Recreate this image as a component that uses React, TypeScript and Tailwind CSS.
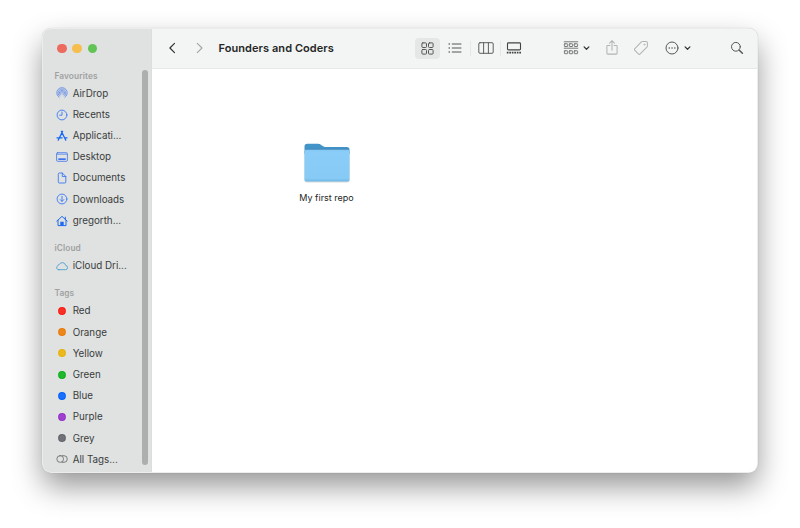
import React from "react";

type IconProps = { children: React.ReactNode; className?: string; w?: number; h?: number };

function Icon({ children, className = "", w = 12, h = 12 }: IconProps) {
  return (
    <svg
      width={w}
      height={h}
      viewBox={`0 0 ${w} ${h}`}
      fill="none"
      stroke="currentColor"
      strokeLinecap="round"
      strokeLinejoin="round"
      className={`shrink-0 ${className}`}
    >
      {children}
    </svg>
  );
}

const airdrop = (
  <Icon className="text-[#5f87e8]">
    <g strokeWidth="0.8">
      <path d="M3.1 10.4A5.3 5.3 0 1 1 8.9 10.4" />
      <path d="M3.6 9.1A3.95 3.95 0 1 1 8.4 9.1" />
      <path d="M4.3 8A2.65 2.65 0 1 1 7.7 8" />
      <path d="M5.1 7A1.35 1.35 0 1 1 6.9 7" />
    </g>
  </Icon>
);

const recents = (
  <Icon className="text-[#3d78f2]">
    <circle cx="6" cy="6" r="4.9" strokeWidth="0.9" />
    <path d="M6 3V6.2H3.6" strokeWidth="0.9" />
  </Icon>
);

const applications = (
  <Icon className="text-[#1468f5]">
    <path d="M5.4 1.4L9.8 10.2M6.6 1.4L2.2 10.2M1 7.8H6.1M8.8 7.8H11" strokeWidth="1.25" />
  </Icon>
);

const desktop = (
  <Icon className="text-[#3d72ee]">
    <rect x="0.6" y="1.7" width="10.8" height="8.6" rx="1" strokeWidth="0.8" />
    <path d="M1 3.2H11" strokeWidth="0.7" />
    <rect x="2.3" y="7.3" width="7.4" height="1.7" fill="currentColor" stroke="none" />
  </Icon>
);

const documents = (
  <Icon className="text-[#3d78f2]">
    <path d="M2.3 1.9Q2.3 1 3.2 1H6.3L9.8 4.5V10.1Q9.8 11 8.9 11H3.2Q2.3 11 2.3 10.1ZM6.3 1V4.5H9.8" strokeWidth="0.9" />
  </Icon>
);

const downloads = (
  <Icon className="text-[#3d78f2]">
    <circle cx="6" cy="6" r="4.9" strokeWidth="0.9" />
    <path d="M6 3.4V8.2M4.2 6.6L6 8.4L7.8 6.6" strokeWidth="0.95" />
  </Icon>
);

const home = (
  <Icon className="text-[#1f69f0]">
    <path d="M0.8 6.1L6 1.4L11.2 6.1M9.3 4.2V2.2M2 5.4V10.6H10V5.4" strokeWidth="1" />
    <path d="M4.3 10.8V6.8H7.7V10.8Z" fill="currentColor" stroke="none" />
  </Icon>
);

const cloud = (
  <Icon className="text-[#4fa0cf]">
    <path
      d="M2.9 9.7H9.3A2.1 2.1 0 0 0 9.6 5.5A3.3 3.3 0 0 0 3.4 4.4A1.7 1.7 0 0 0 1.8 5.9A2 2 0 0 0 2.9 9.7Z"
      strokeWidth="0.9"
    />
  </Icon>
);

const allTags = (
  <Icon className="text-[#5c5e5e]">
    <rect x="0.9" y="2.7" width="6.6" height="6.6" rx="3.1" strokeWidth="0.75" />
    <path d="M6 2.7H8A3.3 3.3 0 0 1 8 9.3H6" strokeWidth="0.75" />
  </Icon>
);

function Dot({ className }: { className: string }) {
  return (
    <svg width="12" height="12" viewBox="0 0 12 12" className={`shrink-0 ${className}`}>
      <circle cx="6" cy="6" r="3.9" fill="currentColor" />
      <circle cx="6" cy="6" r="2.9" fill="#fff" fillOpacity="0.1" />
    </svg>
  );
}

type Entry = { label: string; icon: React.ReactNode };

const favourites: Entry[] = [
  { label: "AirDrop", icon: airdrop },
  { label: "Recents", icon: recents },
  { label: "Applicati...", icon: applications },
  { label: "Desktop", icon: desktop },
  { label: "Documents", icon: documents },
  { label: "Downloads", icon: downloads },
  { label: "gregorth...", icon: home },
];

const tags: Entry[] = [
  { label: "Red", icon: <Dot className="text-[#fa190f]" /> },
  { label: "Orange", icon: <Dot className="text-[#ea7a05]" /> },
  { label: "Yellow", icon: <Dot className="text-[#e9b005]" /> },
  { label: "Green", icon: <Dot className="text-[#09b017]" /> },
  { label: "Blue", icon: <Dot className="text-[#0060fb]" /> },
  { label: "Purple", icon: <Dot className="text-[#952cc9]" /> },
  { label: "Grey", icon: <Dot className="text-[#606268]" /> },
  { label: "All Tags...", icon: allTags },
];

function Section({ title, entries, className = "" }: { title: string; entries: Entry[]; className?: string }) {
  return (
    <section className={className}>
      <h2 className="flex h-[14px] items-center pl-[11.5px] text-[8.3px] font-semibold tracking-[0.1px] text-[#9fa1a1]">
        {title}
      </h2>
      <ul>
        {entries.map((e) => (
          <li key={e.label} className="flex h-[21.2px] items-center gap-[4.7px] pl-[13px] text-[9.8px] text-[#3a3c3c]">
            {e.icon}
            <span className="pt-[1.4px] whitespace-nowrap">{e.label}</span>
          </li>
        ))}
      </ul>
    </section>
  );
}

function Sidebar() {
  return (
    <aside className="relative w-[108.5px] shrink-0 border-r border-[#dcdedd] bg-[#dfe2e1]">
      <div className="flex h-[39.8px] items-center gap-[5.8px] pb-px pl-[14.3px]">
        <span className="size-[9.4px] rounded-full bg-[#ed6a5f]" />
        <span className="size-[9.4px] rounded-full bg-[#f5be4e]" />
        <span className="size-[9.4px] rounded-full bg-[#61c455]" />
      </div>
      <Section title="Favourites" entries={favourites} />
      <Section title="iCloud" entries={[{ label: "iCloud Dri...", icon: cloud }]} className="mt-[10px]" />
      <Section title="Tags" entries={tags} className="mt-[10.2px]" />
      <span className="absolute top-[41px] right-[2.5px] h-[395px] w-[6px] rounded-full bg-[#adafaf]" />
    </aside>
  );
}

function Toolbar() {
  return (
    <header className="flex h-10 shrink-0 items-center border-b border-[#e6e8e7] bg-[#f3f5f4] pb-px text-[#555757]">
      <Icon w={8} h={12} className="ml-[16.5px] text-[#303232]">
        <path d="M6.5 1.3L1.9 6L6.5 10.7" strokeWidth="1.15" />
      </Icon>
      <Icon w={8} h={12} className="ml-[20px] text-[#a5a7a7]">
        <path d="M1.3 1.3L6 6L1.3 10.7" strokeWidth="1.15" />
      </Icon>
      <h1 className="ml-[14.5px] w-[196.5px] whitespace-nowrap text-[11px] font-semibold tracking-[0.07px] text-[#252727]">Founders and Coders</h1>

      <div className="flex h-[21px] w-[25px] items-center justify-center rounded-[4px] bg-[#e5e7e6]">
        <Icon w={13} h={13}>
          <g strokeWidth="1">
            <rect x="0.9" y="0.9" width="4.6" height="4.6" rx="0.9" />
            <rect x="7.5" y="0.9" width="4.6" height="4.6" rx="0.9" />
            <rect x="0.9" y="7.5" width="4.6" height="4.6" rx="0.9" />
            <rect x="7.5" y="7.5" width="4.6" height="4.6" rx="0.9" />
          </g>
        </Icon>
      </div>
      <Icon w={14} h={12} className="ml-[8px]">
        <path d="M4.2 2H13M4.2 6H13M4.2 10H13" strokeWidth="1" />
        <path d="M1.2 2H1.3M1.2 6H1.3M1.2 10H1.3" strokeWidth="1.5" />
      </Icon>
      <span className="ml-[8px] h-[15px] w-px bg-[#e6e8e7]" />
      <Icon w={16} h={12} className="ml-[6.5px]">
        <path d="M2 0.7H14Q15.2 0.7 15.2 1.9V10.1Q15.2 11.3 14 11.3H2Q0.8 11.3 0.8 10.1V1.9Q0.8 0.7 2 0.7ZM5.6 0.8V11.2M10.4 0.8V11.2" strokeWidth="0.95" />
      </Icon>
      <span className="ml-[6px] h-[15px] w-px bg-[#e6e8e7]" />
      <Icon w={16} h={12} className="ml-[5.5px] text-[#424444]">
        <rect x="1.5" y="0.9" width="13" height="7" rx="0.9" strokeWidth="1.1" />
        <path d="M0.8 10.6H15" strokeWidth="1.7" strokeDasharray="1.7 0.8" strokeLinecap="butt" />
      </Icon>

      <Icon w={16} h={14} className="ml-[41px] text-[#696b6b]">
        <path d="M1.2 0.8H14.8M1.2 7.2H14.8" strokeWidth="0.9" />
        <g strokeWidth="0.9">
          <rect x="1.4" y="2.8" width="3.3" height="2.7" rx="0.5" />
          <rect x="6.35" y="2.8" width="3.3" height="2.7" rx="0.5" />
          <rect x="11.3" y="2.8" width="3.3" height="2.7" rx="0.5" />
          <rect x="1.4" y="9.8" width="3.3" height="2.9" rx="0.5" />
          <rect x="6.35" y="9.8" width="3.3" height="2.9" rx="0.5" />
          <rect x="11.3" y="9.8" width="3.3" height="2.9" rx="0.5" />
        </g>
      </Icon>
      <Icon w={7} h={6} className="ml-[4px] text-[#343636]">
        <path d="M1.1 1.9L3.5 4.3L5.9 1.9" strokeWidth="1.25" />
      </Icon>
      <Icon w={12} h={16} className="ml-[16px] text-[#b2b4b4]">
        <path d="M4 5.5H1.7Q0.9 5.5 0.9 6.3V13.3Q0.9 14.1 1.7 14.1H10.3Q11.1 14.1 11.1 13.3V6.3Q11.1 5.5 10.3 5.5H8M6 10.2V0.9M3.6 3.1L6 0.7L8.4 3.1" strokeWidth="1.05" />
      </Icon>
      <Icon w={16} h={16} className="ml-[15px] text-[#b2b4b4]">
        <path
          d="M8.4 1.9Q8.9 1.4 9.6 1.4H13Q14.4 1.4 14.4 2.8V5.9Q14.4 6.6 13.9 7.1L7.2 13.9Q6.3 14.8 5.4 13.9L1.9 10.4Q1 9.5 1.9 8.6Z"
          strokeWidth="1.05"
        />
        <circle cx="11.4" cy="4.6" r="0.6" strokeWidth="0.7" />
      </Icon>
      <Icon w={14} h={14} className="ml-[16px]">
        <circle cx="7" cy="7" r="6" strokeWidth="1" />
        <path d="M4.2 7H4.3M7 7H7.1M9.8 7H9.9" strokeWidth="1.4" />
      </Icon>
      <Icon w={7} h={6} className="ml-[5px] text-[#343636]">
        <path d="M1.1 1.9L3.5 4.3L5.9 1.9" strokeWidth="1.25" />
      </Icon>
      <Icon w={14} h={14} className="mr-[13px] ml-auto">
        <circle cx="5.9" cy="5.8" r="4.4" strokeWidth="1" />
        <path d="M9.3 9.2L12.4 12.3" strokeWidth="1.5" />
      </Icon>
    </header>
  );
}

function Folder() {
  return (
    <svg width="48" height="42" viewBox="0 0 48 42">
      <defs>
        <linearGradient id="face" x1="0" y1="0" x2="0" y2="1">
          <stop offset="0" stopColor="#83c8f4" />
          <stop offset="0.1" stopColor="#8acdf8" />
          <stop offset="0.9" stopColor="#86caf5" />
          <stop offset="1" stopColor="#70b7e5" />
        </linearGradient>
      </defs>
      <path d="M1.2 9H46.8V37.6Q46.8 40.6 44 40.6H4Q1.2 40.6 1.2 37.6Z" fill="#b4bdc3" fillOpacity="0.55" />
      <path d="M1.5 4.5Q1.5 1.7 4.3 1.7H15Q16.8 1.7 18.2 3L20 4.3Q21 5 22.5 5H43.8Q46.5 5 46.5 7.7V12H1.5Z" fill="#4293c8" />
      <path d="M1.5 9.4Q1.5 7.2 4 7.2H44Q46.5 7.2 46.5 9.4V36.9Q46.5 39.6 43.8 39.6H4.2Q1.5 39.6 1.5 36.9Z" fill="url(#face)" />
      <path d="M2.3 7.3H45.7" stroke="#3f82b3" strokeWidth="0.7" />
    </svg>
  );
}

export default function App() {
  return (
    <div className="h-[528px] w-[800px] overflow-hidden bg-white pt-[29px] pl-[43px] font-['Inter',sans-serif]">
      <div className="h-[442.5px] w-[714px] rounded-[8px] shadow-[0_0_0_1px_#ececec,0_0_1px_1px_rgba(0,0,0,0.2),0_14px_30px_rgba(0,0,0,0.42)]">
        <div className="flex h-full overflow-hidden rounded-[8px] bg-white">
          <Sidebar />
          <div className="flex min-w-0 flex-1 flex-col">
            <Toolbar />
            <main className="flex-1 bg-white pt-[73px] pl-[134px]">
              <figure className="flex w-[82px] flex-col items-center">
                <Folder />
                <figcaption className="mt-[7px] whitespace-nowrap text-[9px] leading-[14px] text-[#262626]">My first repo</figcaption>
              </figure>
            </main>
          </div>
        </div>
      </div>
    </div>
  );
}
